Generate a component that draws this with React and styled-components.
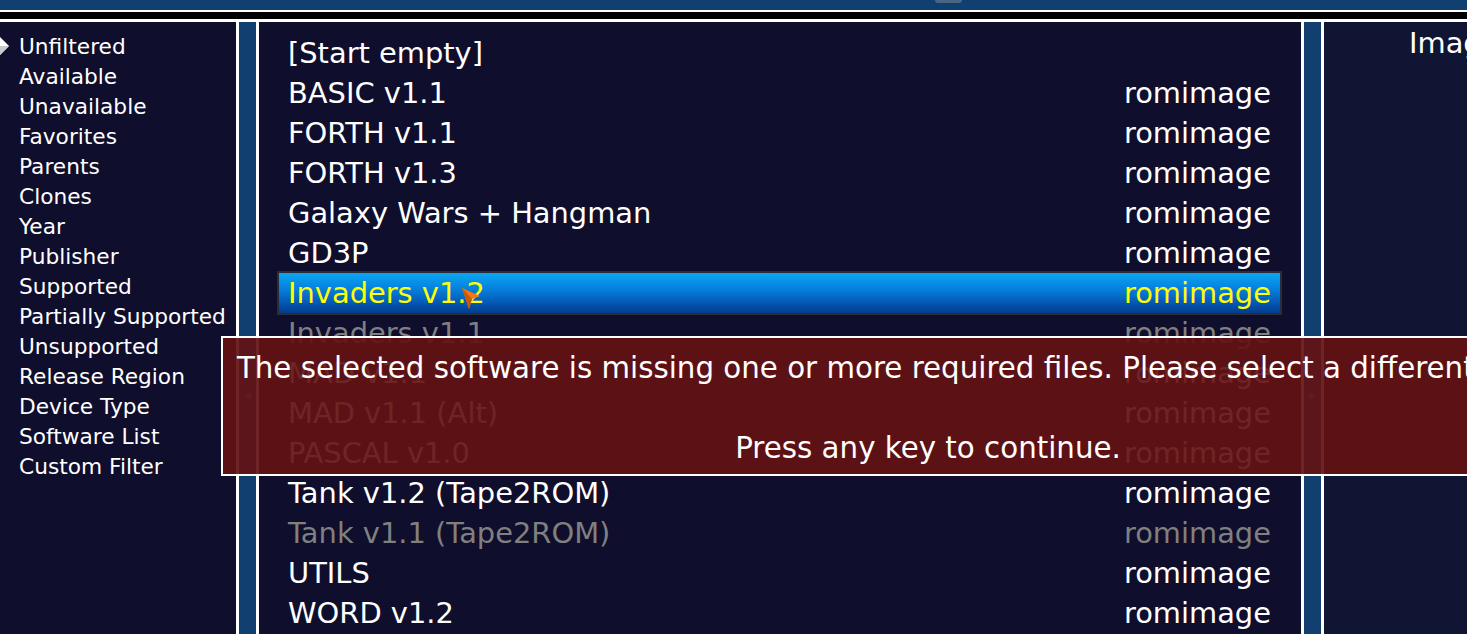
import React from "react";
import styled, { createGlobalStyle } from "styled-components";

const GlobalStyles = createGlobalStyle`
    * {
        margin: 0;
        padding: 0;
        box-sizing: border-box;
    }
    html, body {
        width: 1467px;
        height: 634px;
        overflow: hidden;
        background: #0f0e2c;
    }
`;

const filters = [
    "Unfiltered",
    "Available",
    "Unavailable",
    "Favorites",
    "Parents",
    "Clones",
    "Year",
    "Publisher",
    "Supported",
    "Partially Supported",
    "Unsupported",
    "Release Region",
    "Device Type",
    "Software List",
    "Custom Filter",
];

const software = [
    { name: "[Start empty]", type: "" },
    { name: "BASIC v1.1", type: "romimage" },
    { name: "FORTH v1.1", type: "romimage" },
    { name: "FORTH v1.3", type: "romimage" },
    { name: "Galaxy Wars + Hangman", type: "romimage" },
    { name: "GD3P", type: "romimage" },
    { name: "Invaders v1.2", type: "romimage", selected: true },
    { name: "Invaders v1.1", type: "romimage", missing: true },
    { name: "MAD v1.1", type: "romimage" },
    { name: "MAD v1.1 (Alt)", type: "romimage" },
    { name: "PASCAL v1.0", type: "romimage" },
    { name: "Tank v1.2 (Tape2ROM)", type: "romimage" },
    { name: "Tank v1.1 (Tape2ROM)", type: "romimage", missing: true },
    { name: "UTILS", type: "romimage" },
    { name: "WORD v1.2", type: "romimage" },
];

function App() {
    return (
        <>
            <GlobalStyles />
            <Screen>
                <TopBar>
                    <TopKnob />
                </TopBar>
                <Rule />
                <Columns>
                    <FilterPanel>
                        {filters.map((f, i) => (
                            <FilterRow key={f}>
                                <Marker>
                                    {i === 0 && (
                                        <svg width="10" height="18" viewBox="0 0 10 18">
                                            <polygon points="0,0 9,9 0,18" fill="#ffffff" />
                                            <polygon points="0,9 9,9 0,18" fill="#c8c8d0" />
                                        </svg>
                                    )}
                                </Marker>
                                {f}
                            </FilterRow>
                        ))}
                    </FilterPanel>
                    <Splitter>
                        <SplitArrow>◂</SplitArrow>
                    </Splitter>
                    <ListPanel>
                        {software.map((s) => (
                            <ItemRow key={s.name} $selected={s.selected} $missing={s.missing}>
                                <span>{s.name}</span>
                                <span>{s.type}</span>
                            </ItemRow>
                        ))}
                    </ListPanel>
                    <Splitter>
                        <SplitArrow>▸</SplitArrow>
                    </Splitter>
                    <ImagePanel>
                        <ImageTitle>Images</ImageTitle>
                    </ImagePanel>
                </Columns>
                <Dialog>
                    <DialogLine>
                        The selected software is missing one or more required files. Please select a different software.
                    </DialogLine>
                    <DialogLine>&nbsp;</DialogLine>
                    <DialogLine>Press any key to continue.</DialogLine>
                </Dialog>
                <Pointer width="20" height="24" viewBox="0 0 20 24">
                    <polygon points="1,1 19,9 11,12 8,22" fill="#f07a10" />
                    <polygon points="1,1 11,12 8,22" fill="#c85a00" />
                </Pointer>
            </Screen>
        </>
    );
}

export default App;

const Screen = styled.div`
    position: relative;
    width: 1467px;
    height: 634px;
    display: flex;
    flex-direction: column;
    overflow: hidden;
    font-family: "DejaVu Sans", Verdana, sans-serif;
    color: #ffffff;
`;

const TopBar = styled.div`
    height: 10px;
    flex-shrink: 0;
    background: #114070;
    display: flex;
`;

const TopKnob = styled.div`
    margin-left: 935px;
    width: 27px;
    height: 3px;
    border-radius: 0 0 6px 6px;
    background: #4a6584;
`;

const Rule = styled.div`
    height: 12px;
    flex-shrink: 0;
    background: #000000;
    border-top: 2px solid #ffffff;
    border-bottom: 3px solid #ffffff;
`;

const Columns = styled.div`
    flex: 1;
    display: flex;
    min-height: 0;
`;

const FilterPanel = styled.div`
    width: 236px;
    flex-shrink: 0;
    padding-top: 10px;
    background: #0f0e2c;
    font-size: 21.7px;
    line-height: 30px;
`;

const FilterRow = styled.div`
    display: flex;
    align-items: center;
    white-space: nowrap;
`;

const Marker = styled.div`
    width: 19px;
    flex-shrink: 0;
    display: flex;
    align-items: center;
    margin-top: -2px;
`;

const Splitter = styled.div`
    width: 23px;
    flex-shrink: 0;
    background: #114070;
    border-left: 3px solid #ffffff;
    border-right: 3px solid #ffffff;
    display: flex;
    justify-content: center;
    padding-top: 363px;
`;

const SplitArrow = styled.div`
    font-size: 14px;
    line-height: 20px;
    color: #7890b0;
`;

const ListPanel = styled.div`
    width: 1042px;
    flex-shrink: 0;
    padding-top: 11px;
    background: #0f0e2c;
    font-size: 28.9px;
    line-height: 40px;
`;

const ItemRow = styled.div`
    height: 40px;
    margin: 0 21px 0 20px;
    padding: 0 9px 0 9px;
    display: flex;
    justify-content: space-between;
    white-space: nowrap;
    color: ${({ $selected, $missing }) =>
        $selected ? "#ffff00" : $missing ? "#808080" : "#ffffff"};
    background: ${({ $selected }) =>
        $selected
            ? "linear-gradient(to bottom, #0aa6f2 0%, #0580dc 40%, #0358b4 75%, #023c8c 100%)"
            : "transparent"};
    box-shadow: ${({ $selected }) => ($selected ? "0 0 0 2px #2c2c38" : "none")};
`;

const ImagePanel = styled.div`
    flex: 1;
    min-width: 0;
    overflow: hidden;
    background: #111534;
    padding: 1px 0 0 85px;
`;

const ImageTitle = styled.div`
    font-size: 28.9px;
    line-height: 40px;
    white-space: nowrap;
`;

const Dialog = styled.div`
    position: absolute;
    left: 221px;
    top: 336px;
    width: 1414px;
    height: 140px;
    padding: 10px 0 6px;
    background: rgba(99, 17, 18, 0.92);
    border: 2px solid #ffffff;
    font-size: 29.3px;
    line-height: 40px;
    text-align: center;
`;

const DialogLine = styled.div`
    white-space: nowrap;
`;

const Pointer = styled.svg`
    position: absolute;
    left: 461px;
    top: 287px;
`;
